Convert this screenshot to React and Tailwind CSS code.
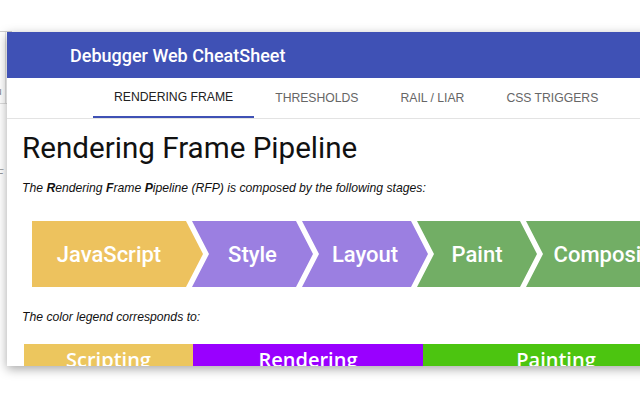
import React from 'react'

const tabs = ['RENDERING FRAME', 'THRESHOLDS', 'RAIL / LIAR', 'CSS TRIGGERS']

const stages = [
  { label: 'JavaScript', w: 'w-[171px]', bg: 'bg-[#edc25e]', first: true },
  { label: 'Style', w: 'w-[121px]', bg: 'bg-[#9b7fe1]' },
  { label: 'Layout', w: 'w-[126px]', bg: 'bg-[#9b7fe1]' },
  { label: 'Paint', w: 'w-[120px]', bg: 'bg-[#72ae65]' },
  { label: 'Composite', w: 'w-[162px]', bg: 'bg-[#72ae65]' },
]

const Chevron = ({ label, w, bg, first }) => (
  <div
    className={`${w} ${bg} h-[66px] shrink-0 flex items-center justify-center text-white text-[22px] font-medium pr-[17px] whitespace-nowrap ${
      first
        ? '[clip-path:polygon(0_0,calc(100%_-_17px)_0,100%_50%,calc(100%_-_17px)_100%,0_100%)]'
        : 'pl-[17px] -ml-[11px] [clip-path:polygon(0_0,calc(100%_-_17px)_0,100%_50%,calc(100%_-_17px)_100%,0_100%,17px_50%)]'
    }`}
    style={{ fontFamily: 'Roboto, sans-serif' }}
  >
    {label}
  </div>
)

export default function App() {
  return (
    <div className="relative w-[640px] h-[400px] overflow-hidden bg-white">
      {/* page behind the popup */}
      <div className="absolute left-0 top-[31px] w-[12px] h-[150px] border-t border-[#d0d0d0]">
        <div className="absolute left-[5px] top-0 w-px h-[72px] bg-[#e2e2e2]" />
        <div className="absolute left-0 top-[71px] w-[12px] h-px bg-[#dcdcdc]" />
        <span className="absolute -left-[4px] top-[52px] text-[10px] text-[#888]" style={{ fontFamily: '"Liberation Sans", sans-serif' }}>u</span>
        <span className="absolute -left-[3px] top-[134px] text-[10px] italic text-[#999]" style={{ fontFamily: '"Liberation Sans", sans-serif' }}>F</span>
      </div>

      {/* popup */}
      <div className="absolute left-[7px] top-[32px] w-[700px] h-[334px] bg-white overflow-hidden shadow-[0_3px_10px_rgba(0,0,0,0.35)] flex flex-col">
        <div className="h-[46px] bg-[#3f51b5] flex items-center pl-[63px] shrink-0">
          <span className="text-white text-[18px] font-medium" style={{ fontFamily: 'Roboto, sans-serif' }}>
            Debugger Web CheatSheet
          </span>
        </div>

        <div className="h-[41px] shrink-0 flex pl-[86px] border-b border-[#e3e3e3]" style={{ fontFamily: '"Liberation Sans", Arial, sans-serif' }}>
          {tabs.map((t, i) => (
            <div
              key={t}
              className={`px-[21px] flex items-center text-[12.2px] ${
                i === 0 ? 'text-[#222] border-b-2 border-[#3f51b5]' : 'text-[#666]'
              }`}
            >
              {t}
            </div>
          ))}
        </div>

        <div className="px-[15px]">
          <h1 className="mt-[15px] text-[29.6px] leading-[28px] text-[#111]" style={{ fontFamily: 'Roboto, sans-serif' }}>
            Rendering Frame Pipeline
          </h1>
          <p className="mt-[20px] text-[12.2px] leading-[12px] italic text-[#111]" style={{ fontFamily: '"Liberation Sans", Arial, sans-serif' }}>
            The <b>R</b>endering <b>F</b>rame <b>P</b>ipeline (RFP) is composed by the following stages:
          </p>

          <div className="mt-[27px] ml-[10px] flex">
            {stages.map((s) => (
              <Chevron key={s.label} {...s} />
            ))}
          </div>

          <p className="mt-[24px] text-[12.2px] leading-[12px] italic text-[#111]" style={{ fontFamily: '"Liberation Sans", Arial, sans-serif' }}>
            The color legend corresponds to:
          </p>

          <div className="mt-[21px] ml-[2px] flex text-white text-[20px] font-semibold" style={{ fontFamily: '"Open Sans", sans-serif' }}>
            <div className="w-[169px] h-[30px] shrink-0 bg-[#ecc65e] flex justify-center pt-[1px]">Scripting</div>
            <div className="w-[230px] h-[30px] shrink-0 bg-[#9900ff] flex justify-center pt-[1px]">Rendering</div>
            <div className="w-[266px] h-[30px] shrink-0 bg-[#4cc510] flex justify-center pt-[1px]">Painting</div>
          </div>
        </div>
      </div>
    </div>
  )
}
